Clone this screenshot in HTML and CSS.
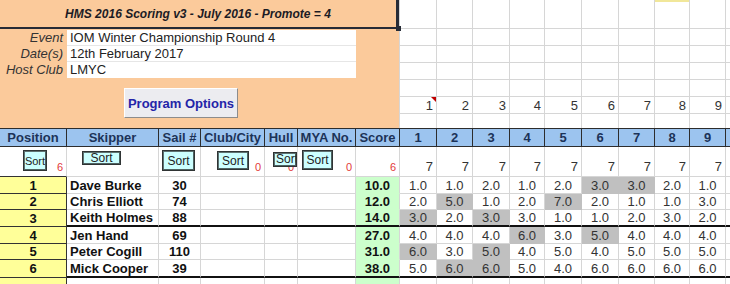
FILE: index.html
```html
<!DOCTYPE html>
<html lang="en">
<head>
    <meta charset="UTF-8">
    <meta name="viewport" content="width=device-width, initial-scale=1.0">
    <title>HMS 2016 Scoring</title>
    <link rel="stylesheet" href="styles.css">
</head>
<body>
    <div class="sheet">
        <div class="panel">
            <div class="title">HMS 2016 Scoring v3 - July 2016 - Promote = 4<span class="handle"></span></div>
            <div class="info">
                <span class="label">Event</span><span class="value">IOM Winter Championship Round 4</span>
                <span class="label">Date(s)</span><span class="value">12th February 2017</span>
                <span class="label">Host Club</span><span class="value last">LMYC</span>
            </div>
            <button class="options">Program Options</button>
        </div>

        <!-- empty sheet to the right of the panel -->
        <div class="c"></div><div class="c"></div><div class="c"></div><div class="c"></div><div class="c"></div><div class="c"></div><div class="c"></div><div class="c mark"></div><div class="c"></div><div class="c"></div>
        <div class="c"></div><div class="c"></div><div class="c"></div><div class="c"></div><div class="c"></div><div class="c"></div><div class="c"></div><div class="c"></div><div class="c"></div><div class="c"></div>
        <div class="c"></div><div class="c"></div><div class="c"></div><div class="c"></div><div class="c"></div><div class="c"></div><div class="c"></div><div class="c"></div><div class="c"></div><div class="c"></div>
        <div class="c"></div><div class="c"></div><div class="c"></div><div class="c"></div><div class="c"></div><div class="c"></div><div class="c"></div><div class="c"></div><div class="c"></div><div class="c"></div>
        <div class="c"></div><div class="c"></div><div class="c"></div><div class="c"></div><div class="c"></div><div class="c"></div><div class="c"></div><div class="c"></div><div class="c"></div><div class="c"></div>
        <div class="c num note">1</div><div class="c num">2</div><div class="c num">3</div><div class="c num">4</div><div class="c num">5</div><div class="c num">6</div><div class="c num">7</div><div class="c num">8</div><div class="c num">9</div><div class="c"></div>
        <div class="c nb"></div><div class="c nb"></div><div class="c nb"></div><div class="c nb"></div><div class="c nb"></div><div class="c nb"></div><div class="c nb"></div><div class="c nb"></div><div class="c nb"></div><div class="c nb"></div>

        <!-- headings -->
        <div class="c hd">Position</div><div class="c hd">Skipper</div><div class="c hd">Sail #</div><div class="c hd">Club/City</div><div class="c hd">Hull</div><div class="c hd">MYA No.</div><div class="c hd">Score</div>
        <div class="c hd">1</div><div class="c hd">2</div><div class="c hd">3</div><div class="c hd">4</div><div class="c hd">5</div><div class="c hd">6</div><div class="c hd">7</div><div class="c hd">8</div><div class="c hd">9</div><div class="c hd"></div>

        <!-- sort buttons -->
        <div class="c st st-pos"><button class="sort sort-pos">Sort</button><span class="cnt">6</span></div>
        <div class="c st"><button class="sort sort-name">Sort</button></div>
        <div class="c st"><button class="sort sort-sail">Sort</button></div>
        <div class="c st"><button class="sort sort-club">Sort</button><span class="cnt">0</span></div>
        <div class="c st"><span class="cnt">0</span><button class="sort sort-hull">Sort</button></div>
        <div class="c st"><button class="sort sort-mya">Sort</button><span class="cnt">0</span></div>
        <div class="c st"><span class="cnt">6</span></div>
        <div class="c st">7</div><div class="c st">7</div><div class="c st">7</div><div class="c st">7</div><div class="c st">7</div><div class="c st">7</div><div class="c st">7</div><div class="c st">7</div><div class="c st">7</div><div class="c st"></div>

        <!-- results -->
        <div class="c pos">1</div><div class="c name">Dave Burke</div><div class="c sail">30</div><div class="c"></div><div class="c"></div><div class="c"></div><div class="c score">10.0</div>
        <div class="c r">1.0</div><div class="c r">1.0</div><div class="c r">2.0</div><div class="c r">1.0</div><div class="c r">2.0</div><div class="c r d">3.0</div><div class="c r d">3.0</div><div class="c r">2.0</div><div class="c r">1.0</div><div class="c"></div>

        <div class="c pos">2</div><div class="c name">Chris Elliott</div><div class="c sail">74</div><div class="c"></div><div class="c"></div><div class="c"></div><div class="c score">12.0</div>
        <div class="c r">2.0</div><div class="c r d">5.0</div><div class="c r">1.0</div><div class="c r">2.0</div><div class="c r d">7.0</div><div class="c r">2.0</div><div class="c r">1.0</div><div class="c r">1.0</div><div class="c r">3.0</div><div class="c"></div>

        <div class="c pos">3</div><div class="c name cut">Keith Holmes</div><div class="c sail cut">88</div><div class="c cut"></div><div class="c cut"></div><div class="c cut"></div><div class="c score cut">14.0</div>
        <div class="c r d cut">3.0</div><div class="c r cut">2.0</div><div class="c r d cut">3.0</div><div class="c r cut">3.0</div><div class="c r cut">1.0</div><div class="c r cut">1.0</div><div class="c r cut">2.0</div><div class="c r cut">3.0</div><div class="c r cut">2.0</div><div class="c cut"></div>

        <div class="c pos">4</div><div class="c name">Jen Hand</div><div class="c sail">69</div><div class="c"></div><div class="c"></div><div class="c"></div><div class="c score">27.0</div>
        <div class="c r">4.0</div><div class="c r">4.0</div><div class="c r">4.0</div><div class="c r d">6.0</div><div class="c r">3.0</div><div class="c r d">5.0</div><div class="c r">4.0</div><div class="c r">4.0</div><div class="c r">4.0</div><div class="c"></div>

        <div class="c pos">5</div><div class="c name">Peter Cogill</div><div class="c sail">110</div><div class="c"></div><div class="c"></div><div class="c"></div><div class="c score">31.0</div>
        <div class="c r d">6.0</div><div class="c r">3.0</div><div class="c r d">5.0</div><div class="c r">4.0</div><div class="c r">5.0</div><div class="c r">4.0</div><div class="c r">5.0</div><div class="c r">5.0</div><div class="c r">5.0</div><div class="c"></div>

        <div class="c pos">6</div><div class="c name cut">Mick Cooper</div><div class="c sail cut">39</div><div class="c cut"></div><div class="c cut"></div><div class="c cut"></div><div class="c score cut">38.0</div>
        <div class="c r cut">5.0</div><div class="c r d cut">6.0</div><div class="c r d cut">6.0</div><div class="c r cut">5.0</div><div class="c r cut">4.0</div><div class="c r cut">6.0</div><div class="c r cut">6.0</div><div class="c r cut">6.0</div><div class="c r cut">6.0</div><div class="c cut"></div>

        <div class="c pos"></div><div class="c"></div><div class="c"></div><div class="c"></div><div class="c"></div><div class="c"></div><div class="c score"></div>
        <div class="c"></div><div class="c"></div><div class="c"></div><div class="c"></div><div class="c"></div><div class="c"></div><div class="c"></div><div class="c"></div><div class="c"></div><div class="c"></div>
    </div>
</body>
</html>
```

FILE: styles.css
```css
* {
    box-sizing: border-box;
}
body {
    margin: 0;
    overflow: hidden;
    background: #fff;
    font-family: "Liberation Sans", Arial, sans-serif;
    font-size: 13px;
    color: #222;
}
.sheet {
    display: grid;
    grid-template-columns: 67px 92px 42px 64px 33px 58px 44px 37px 36px 37px 35px 37px 37px 36px 35px 36px 40px;
    grid-template-rows: 29px 17px 17px 17px 17px 17px 14px 19px 30px 17px 16px 17px 17px 16px 18px 18px;
    width: 766px;
}
.c {
    display: flex;
    align-items: center;
    min-width: 0;
    overflow: hidden;
    white-space: nowrap;
    line-height: 15px;
    border-right: 1px solid #d6d6d6;
    border-bottom: 1px solid #d6d6d6;
}

/* orange block at the top */
.panel {
    grid-column: 1 / 8;
    grid-row: 1 / 8;
    background: #fbca9b;
    border-right: 1px solid #d6d6d6;
}
.title {
    position: relative;
    height: 29px;
    display: flex;
    align-items: center;
    justify-content: center;
    border-right: 3px solid #262b36;
    border-bottom: 2px solid #262b36;
    font-size: 12px;
    font-weight: bold;
    font-style: italic;
    color: #1b1b24;
}
.handle {
    position: absolute;
    right: -5px;
    bottom: -4px;
    width: 5px;
    height: 5px;
    background: #262b36;
}
.info {
    display: grid;
    grid-template-columns: 67px 289px;
    grid-auto-rows: 16px;
    margin-top: 1px;
    line-height: 15px;
}
.label {
    text-align: right;
    padding-right: 4px;
    font-style: italic;
    color: #333;
}
.value {
    background: #fff;
    padding-left: 3px;
    border-bottom: 1px solid #e6e6e6;
    color: #222;
}
.value.last {
    border-bottom: none;
}
.options {
    display: block;
    margin: 10px 0 0 124px;
    width: 114px;
    height: 30px;
    padding: 0;
    background: #ececf0;
    border: 1px solid;
    border-color: #fff #8c8c8c #8c8c8c #fff;
    font-family: inherit;
    font-size: 13px;
    font-weight: bold;
    color: #2424a8;
}

/* plain sheet cells */
.mark {
    box-shadow: inset 0 2px 0 #f1e79a;
}
.num {
    justify-content: flex-end;
    padding-right: 3px;
    color: #333;
}
.note {
    position: relative;
}
.note::after {
    content: "";
    position: absolute;
    top: 0;
    right: 0;
    border-top: 5px solid #c00000;
    border-left: 5px solid transparent;
}
.nb {
    border-bottom: none;
}

/* heading row */
.hd {
    justify-content: center;
    background: #9cc4ef;
    border-top: 1px solid #2d2d2d;
    border-right-color: #2d2d2d;
    border-bottom-color: #2d2d2d;
    font-weight: bold;
    color: #1c3358;
    line-height: 16px;
}

/* sort row */
.st {
    position: relative;
    align-items: flex-end;
    justify-content: flex-end;
    padding: 0 3px 2px 0;
    color: #333;
}
.st-pos {
    border-bottom-color: #333;
}
.cnt {
    font-size: 11px;
    line-height: 13px;
    color: #e23a3a;
}
.sort {
    position: absolute;
    padding: 0;
    overflow: hidden;
    white-space: nowrap;
    background: #ccffff;
    border: 1px solid #2f3434;
    box-shadow: inset -1px -1px 0 #4f6262, inset 1px 1px 0 #5f7272;
    font-family: inherit;
    font-size: 12px;
    line-height: 14px;
    color: #222;
}
.sort-pos {
    left: 23px;
    top: 3px;
    width: 24px;
    height: 21px;
    font-size: 11px;
}
.sort-name {
    left: 15px;
    top: 4px;
    width: 39px;
    height: 14px;
    line-height: 12px;
}
.sort-sail {
    left: 3px;
    top: 3px;
    width: 33px;
    height: 21px;
}
.sort-club {
    left: 16px;
    top: 4px;
    width: 32px;
    height: 19px;
}
.sort-hull {
    left: 8px;
    top: 5px;
    width: 24px;
    height: 15px;
    padding: 0 0 2px 2px;
    text-align: left;
    line-height: 12px;
}
.sort-mya {
    left: 4px;
    top: 3px;
    width: 31px;
    height: 20px;
}

/* result rows */
.pos {
    justify-content: center;
    background: #ffff99;
    border-color: #333;
    font-weight: bold;
    color: #111;
}
.name {
    padding-left: 3px;
    font-weight: bold;
    color: #111;
}
.sail {
    justify-content: center;
    font-weight: bold;
    color: #111;
}
.score {
    justify-content: flex-end;
    padding-right: 9px;
    background: #ccffcc;
    border-bottom-color: #ccffcc;
    font-weight: bold;
    color: #111;
}
.r {
    justify-content: center;
    color: #333;
}
.d {
    background: #c0c0c0;
    border-color: #c0c0c0;
}
.cut {
    border-bottom: 2px solid #111;
}
```
